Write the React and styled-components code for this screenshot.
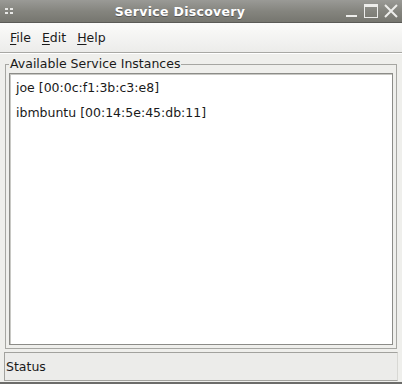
import styled, { createGlobalStyle } from 'styled-components';

const Global = createGlobalStyle`
  html, body { margin: 0; padding: 0; background: #d8d8d4; }
  body { font-family: "DejaVu Sans", "Liberation Sans", sans-serif; font-size: 12.5px; color: #1a1a1a; }
`;

const Window = styled.div`
  width: 402px;
  height: 384px;
  display: flex;
  flex-direction: column;
  background: #efefec;
  box-sizing: border-box;
  border-bottom: 2px solid #6c6c6a;
  overflow: hidden;
`;

const TitleBar = styled.div`
  height: 22px;
  flex: none;
  display: flex;
  align-items: center;
  padding: 0 4px 0 5px;
  background: linear-gradient(#9a9a96, #85857f 50%, #76766f);
  border-bottom: 1px solid #5a5a56;
`;

const Title = styled.div`
  flex: 1;
  text-align: center;
  color: #ffffff;
  font-weight: bold;
  font-size: 12.5px;
  letter-spacing: 0.3px;
  text-shadow: 0 1px 0 #555;
`;

const Controls = styled.div`
  display: flex;
  align-items: center;
  gap: 6px;
`;

const MenuBar = styled.div`
  height: 29px;
  flex: none;
  display: flex;
  align-items: center;
  gap: 11px;
  padding: 0 9px 0 10px;
  background: linear-gradient(#fbfbfa, #ececea);
  border-bottom: 1px solid #a8a8a4;
`;

const MenuItem = styled.span`
  font-size: 12.5px;
  color: #1a1a1a;
  & u { text-decoration: underline; text-underline-offset: 2px; }
`;

const Body = styled.div`
  flex: 1;
  display: flex;
  flex-direction: column;
  padding: 2px 5px 3px 5px;
  border-top: 1px solid #ffffff;
  min-height: 0;
`;

const Group = styled.fieldset`
  flex: 1;
  margin: 0;
  padding: 0 3px 3px 3px;
  border: 1px solid #a6a6a2;
  border-radius: 0;
  display: flex;
  min-height: 0;
`;

const Legend = styled.legend`
  padding: 0 1px;
  margin-left: 0;
  font-size: 12.5px;
  color: #1a1a1a;
  line-height: 16px;
`;

const List = styled.div`
  flex: 1;
  background: #ffffff;
  border: 1px solid #8c8c88;
  box-shadow: inset 1px 1px 0 #c8c8c4;
  padding: 5px 6px;
  display: flex;
  flex-direction: column;
  gap: 7px;
  margin-top: 1px;
`;

const Row = styled.div`
  font-size: 12.5px;
  line-height: 18px;
  color: #1a1a1a;
`;

const StatusBar = styled.div`
  height: 27px;
  flex: none;
  display: flex;
  align-items: center;
  margin: 0 4px;
  padding: 0 1px;
  background: #ececea;
  border: 1px solid #a2a29e;
  border-right-color: #d8d8d4;
  font-size: 12.5px;
  color: #1a1a1a;
`;

const Footer = styled.div`
  height: 1px;
  flex: none;
  background: #efefec;
`;

function Handle() {
  return (
    <svg width="9" height="7" viewBox="0 0 9 7">
      <rect x="0" y="0" width="3" height="2" fill="#e8e8e6" />
      <rect x="5" y="0" width="3" height="2" fill="#e8e8e6" />
      <rect x="0" y="4" width="3" height="2" fill="#e8e8e6" />
      <rect x="5" y="4" width="3" height="2" fill="#e8e8e6" />
    </svg>
  );
}

function Minimize() {
  return (
    <svg width="12" height="14" viewBox="0 0 12 14">
      <rect x="0" y="11" width="11" height="2" fill="#ededeb" />
    </svg>
  );
}

function Maximize() {
  return (
    <svg width="14" height="14" viewBox="0 0 14 14">
      <rect x="0.5" y="0.5" width="13" height="13" fill="none" stroke="#ededeb" />
      <rect x="1" y="1" width="12" height="2" fill="#ededeb" />
    </svg>
  );
}

function Close() {
  return (
    <svg width="14" height="14" viewBox="0 0 14 14">
      <path d="M1 1 L13 13 M13 1 L1 13" stroke="#ededeb" strokeWidth="2" />
    </svg>
  );
}

export default function App() {
  return (
    <>
      <Global />
      <Window>
        <TitleBar>
          <Handle />
          <Title>Service Discovery</Title>
          <Controls>
            <Minimize />
            <Maximize />
            <Close />
          </Controls>
        </TitleBar>
        <MenuBar>
          <MenuItem><u>F</u>ile</MenuItem>
          <MenuItem><u>E</u>dit</MenuItem>
          <MenuItem><u>H</u>elp</MenuItem>
        </MenuBar>
        <Body>
          <Group>
            <Legend>Available Service Instances</Legend>
            <List>
              <Row>joe [00:0c:f1:3b:c3:e8]</Row>
              <Row>ibmbuntu [00:14:5e:45:db:11]</Row>
            </List>
          </Group>
        </Body>
        <StatusBar>Status</StatusBar>
        <Footer />
      </Window>
    </>
  );
}
